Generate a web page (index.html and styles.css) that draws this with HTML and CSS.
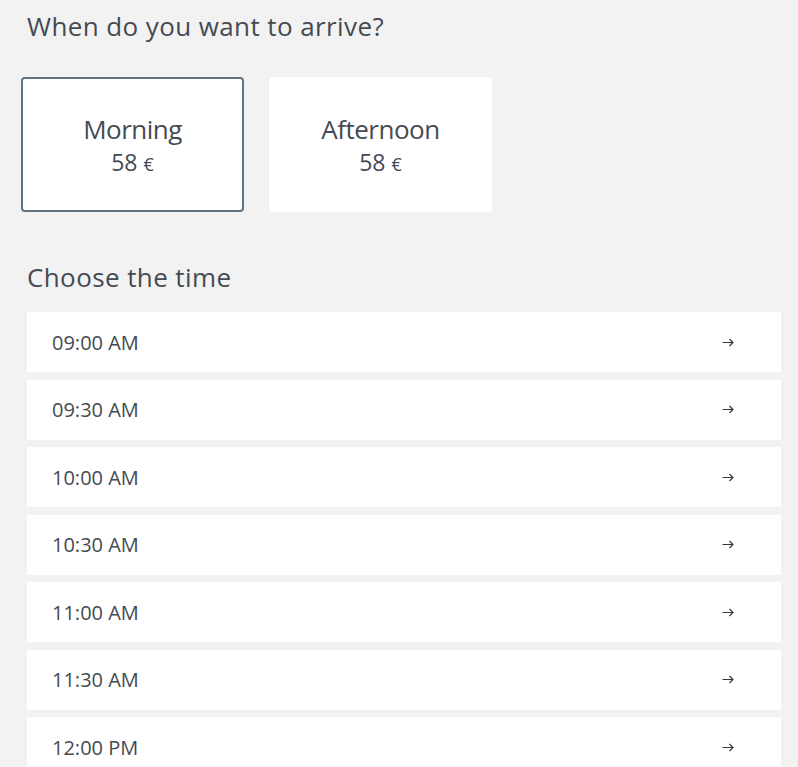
FILE: index.html
```html
<!DOCTYPE html>
<html>
<head>
<meta charset="utf-8">
<link rel="stylesheet" href="styles.css">
</head>
<body>
<div class="page">
  <h2 class="title">When do you want to arrive?</h2>
  <div class="periods">
    <div class="period selected">
      <div class="period-name">Morning</div>
      <div class="period-price">58 <span class="cur">€</span></div>
    </div>
    <div class="period">
      <div class="period-name">Afternoon</div>
      <div class="period-price">58 <span class="cur">€</span></div>
    </div>
  </div>
  <h2 class="title title-time">Choose the time</h2>
  <div class="slots">
    <div class="slot"><span class="time">09:00 AM</span><svg class="arrow" viewBox="0 0 12 9"><path d="M0.5 4.5H11M7.5 1L11 4.5L7.5 8"/></svg></div>
    <div class="slot"><span class="time">09:30 AM</span><svg class="arrow" viewBox="0 0 12 9"><path d="M0.5 4.5H11M7.5 1L11 4.5L7.5 8"/></svg></div>
    <div class="slot"><span class="time">10:00 AM</span><svg class="arrow" viewBox="0 0 12 9"><path d="M0.5 4.5H11M7.5 1L11 4.5L7.5 8"/></svg></div>
    <div class="slot"><span class="time">10:30 AM</span><svg class="arrow" viewBox="0 0 12 9"><path d="M0.5 4.5H11M7.5 1L11 4.5L7.5 8"/></svg></div>
    <div class="slot"><span class="time">11:00 AM</span><svg class="arrow" viewBox="0 0 12 9"><path d="M0.5 4.5H11M7.5 1L11 4.5L7.5 8"/></svg></div>
    <div class="slot"><span class="time">11:30 AM</span><svg class="arrow" viewBox="0 0 12 9"><path d="M0.5 4.5H11M7.5 1L11 4.5L7.5 8"/></svg></div>
    <div class="slot"><span class="time">12:00 PM</span><svg class="arrow" viewBox="0 0 12 9"><path d="M0.5 4.5H11M7.5 1L11 4.5L7.5 8"/></svg></div>
  </div>
</div>
</body>
</html>
```
FILE: styles.css
```css
html, body {
  margin: 0;
  padding: 0;
  background: #f2f2f2;
}
body {
  font-family: "Open Sans", "Liberation Sans", sans-serif;
  color: #444b52;
}
.page {
  padding: 10px 17px 0 21px;
}
.title {
  margin: 0;
  font-size: 26px;
  font-weight: 400;
  line-height: 32px;
  padding-left: 6px;
  letter-spacing: 0.4px;
}
.periods {
  display: flex;
  gap: 25px;
  margin-top: 35px;
}
.period {
  width: 223px;
  height: 135px;
  box-sizing: border-box;
  background: #fff;
  border-radius: 4px;
  border: 2px solid transparent;
  display: flex;
  flex-direction: column;
  align-items: center;
  justify-content: center;
  padding-top: 3px;
}
.period.selected {
  border-color: #5f7383;
}
.period-name {
  font-size: 26px;
  line-height: 34px;
  letter-spacing: -0.5px;
}
.period-price {
  font-size: 23px;
  line-height: 32px;
}
.cur {
  font-size: 18px;
}
.title-time {
  margin-top: 49px;
}
.slots {
  display: flex;
  flex-direction: column;
  gap: 7.5px;
  margin-top: 19px;
  margin-left: 6px;
}
.slot {
  height: 60px;
  background: #fff;
  display: flex;
  align-items: center;
  justify-content: space-between;
  padding: 0 47px 0 25px;
}
.time {
  font-size: 20px;
}
.arrow {
  width: 12px;
  height: 9px;
  fill: none;
  stroke: #333a40;
  stroke-width: 1.2;
}
```
